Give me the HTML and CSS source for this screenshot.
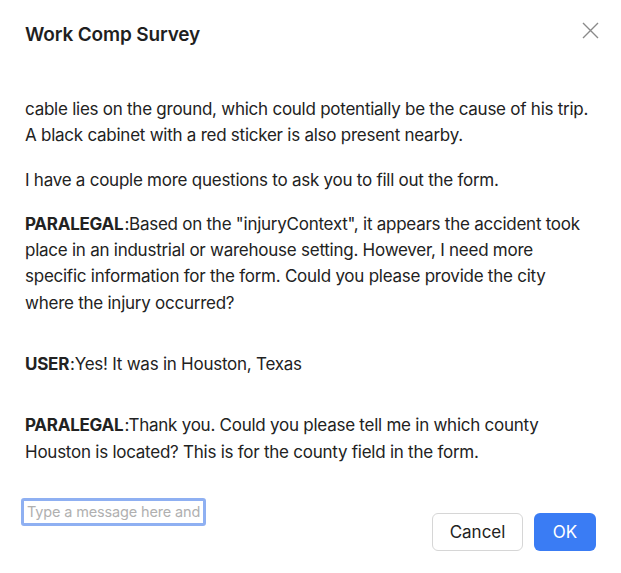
FILE: index.html
```html
<!DOCTYPE html>
<html>
<head>
<meta charset="utf-8">
<link rel="stylesheet" href="styles.css">
</head>
<body>
<div class="modal">
  <div class="header">
    <h1 class="title">Work Comp Survey</h1>
    <button class="close" aria-label="Close">
      <svg width="17" height="17" viewBox="0 0 17 17"><path d="M1 1L16 16M16 1L1 16" stroke="#8a8a8a" stroke-width="1.4" fill="none"/></svg>
    </button>
  </div>
  <div class="body">
    <p class="para">cable lies on the ground, which could potentially be the cause of his trip. A black cabinet with a red sticker is also present nearby.</p>
    <p class="para">I have a couple more questions to ask you to fill out the form.</p>
    <p class="para msg"><b class="who">PARALEGAL</b>:Based on the "injuryContext", it appears the accident took place in an industrial or warehouse setting. However, I need more specific information for the form. Could you please provide the city where the injury occurred?</p>
    <p class="para msg"><b class="who">USER</b>:Yes! It was in Houston, Texas</p>
    <p class="para msg"><b class="who">PARALEGAL</b>:Thank you. Could you please tell me in which county Houston is located? This is for the county field in the form.</p>
  </div>
  <div class="footer">
    <input class="input" type="text" placeholder="Type a message here and hit enter" autofocus>
    <div class="actions">
      <button class="btn btn-cancel">Cancel</button>
      <button class="btn btn-ok">OK</button>
    </div>
  </div>
</div>
</body>
</html>
```
FILE: styles.css
```css
html, body {
  margin: 0;
  padding: 0;
  background: #fff;
}
body {
  font-family: Inter, "Noto Sans", sans-serif;
  color: #222;
  width: 621px;
  height: 573px;
  overflow: hidden;
}
.modal {
  padding: 0 25px;
}
.header {
  display: flex;
  justify-content: space-between;
  align-items: flex-start;
  padding-top: 22px;
}
.title {
  margin: 0;
  font-size: 19px;
  font-weight: 600;
  line-height: 26px;
  letter-spacing: -0.15px;
  color: #1f1f1f;
}
.close {
  border: 0;
  background: none;
  padding: 0;
  margin: 0 -3px 0 0;
  width: 17px;
  height: 17px;
  display: flex;
}
.body {
  padding-top: 48px;
}
.para {
  margin: 0 0 18px;
  font-size: 17px;
  line-height: 26.3px;
  letter-spacing: -0.25px;
}
.msg {
  margin-bottom: 35px;
}
.who {
  font-weight: 700;
  margin-right: 1px;
}
.footer {
  display: flex;
  justify-content: space-between;
  align-items: flex-start;
  margin-left: -4px;
  margin-right: 0;
}
.input {
  box-sizing: border-box;
  width: 185px;
  height: 28px;
  margin-top: -2px;
  border: 3px solid #8fb0f2;
  border-radius: 3px;
  padding: 0 3px;
  font-family: Inter, "Noto Sans", sans-serif;
  font-size: 14.5px;
  letter-spacing: -0.15px;
  color: #222;
  caret-color: #2f6fe8;
  outline: none;
}
.input::placeholder {
  color: #b0b0b0;
}
.actions {
  display: flex;
  gap: 11px;
  margin-top: 13px;
}
.btn {
  height: 38px;
  border-radius: 6px;
  font-family: Inter, "Noto Sans", sans-serif;
  font-size: 17px;
  padding: 0;
}
.btn-cancel {
  width: 91px;
  background: #fff;
  border: 1px solid #d6d6d6;
  color: #222;
}
.btn-ok {
  width: 62px;
  background: #3a7cf4;
  border: 0;
  color: #fff;
}
```
